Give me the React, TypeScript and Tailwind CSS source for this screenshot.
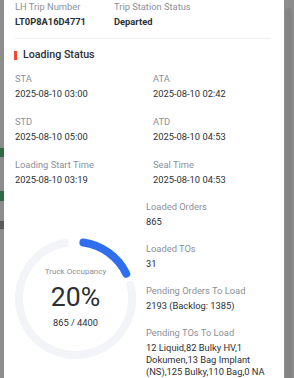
import React from "react";

const polar = (cx: number, cy: number, r: number, deg: number) => {
  const a = ((deg - 90) * Math.PI) / 180;
  return [cx + r * Math.cos(a), cy + r * Math.sin(a)];
};
const arc = (cx: number, cy: number, r: number, a1: number, a2: number) => {
  const [x1, y1] = polar(cx, cy, r, a1);
  const [x2, y2] = polar(cx, cy, r, a2);
  const large = a2 - a1 > 180 ? 1 : 0;
  return `M ${x1} ${y1} A ${r} ${r} 0 ${large} 1 ${x2} ${y2}`;
};

function Field({ label, value, bold }: { label: string; value: React.ReactNode; bold?: boolean }) {
  return (
    <div>
      <div className="text-[9.33px] leading-[14px] text-[#8b8f99]">{label}</div>
      <div
        className={`mt-[2px] text-[9.33px] leading-[12px] text-[#2b2f36] ${bold ? "font-bold" : ""}`}
      >
        {value}
      </div>
    </div>
  );
}

export default function App() {
  return (
    <div
      className="flex w-[294px] h-[378px] overflow-hidden bg-[#8c8c8c]"
      style={{ fontFamily: "Roboto, 'Noto Sans', sans-serif" }}
    >
      <div className="w-[4px] flex flex-col">
        <div className="h-[148px]" />
        <div className="h-[9px] bg-[#2f6a44]" />
        <div className="h-[34px]" />
        <div className="h-[10px] bg-[#2f6a44]" />
        <div className="h-[20px]" />
        <div className="h-[8px] bg-[#5a5a5a]" />
      </div>
      <div className="w-[280px] bg-white pl-[11px] pr-[13px]">
        <div className="flex">
          <div className="w-[99px]">
            <Field label="LH Trip Number" value="LT0P8A16D4771" bold />
          </div>
          <Field label="Trip Station Status" value="Departed" bold />
        </div>
        <div className="mt-[10px] h-px bg-[#eceef2]" />
        <div className="mt-[8px] flex items-center h-[16px] -ml-[1px]">
          <div className="w-[3px] h-[9px] bg-[#ee4d2d]" />
          <div className="ml-[6px] text-[10.67px] font-medium text-[#2b2f36] leading-[16px]">
            Loading Status
          </div>
        </div>
        <div className="mt-[9px] grid grid-cols-[138px_1fr] gap-y-[15px]">
          <Field label="STA" value="2025-08-10 03:00" />
          <Field label="ATA" value="2025-08-10 02:42" />
          <Field label="STD" value="2025-08-10 05:00" />
          <Field label="ATD" value="2025-08-10 04:53" />
          <Field label="Loading Start Time" value="2025-08-10 03:19" />
          <Field label="Seal Time" value="2025-08-10 04:53" />
        </div>
        <div className="mt-[14px] flex items-start">
          <div className="relative w-[121px] h-[121px] mt-[38px] shrink-0">
            <svg width="121" height="121" viewBox="0 0 121 121" className="absolute inset-0">
              <path
                d={arc(60.5, 60.5, 56.5, 76, 349)}
                fill="none"
                stroke="#f2f4f8"
                strokeWidth="8"
                strokeLinecap="round"
              />
              <path
                d={arc(60.5, 60.5, 56.5, 8, 64)}
                fill="none"
                stroke="#2f6fef"
                strokeWidth="8"
                strokeLinecap="round"
              />
            </svg>
            <div className="absolute inset-0 flex flex-col items-center">
              <div className="mt-[29px] text-[8px] leading-[10px] text-[#8b8f99]">Truck Occupancy</div>
              <div className="mt-[5px] text-[26.67px] leading-[30px] text-[#2b2f36]">20%</div>
              <div className="mt-[5px] text-[9.33px] leading-[12px] text-[#2b2f36]">865 / 4400</div>
            </div>
          </div>
          <div className="ml-[10px] flex flex-col gap-y-[14px] w-[125px]">
            <Field label="Loaded Orders" value="865" />
            <Field label="Loaded TOs" value="31" />
            <Field label="Pending Orders To Load" value="2193 (Backlog: 1385)" />
            <Field
              label="Pending TOs To Load"
              value="12 Liquid,82 Bulky HV,1 Dokumen,13 Bag Implant (NS),125 Bulky,110 Bag,0 NA"
            />
          </div>
        </div>
      </div>
      <div className="w-[10px] flex flex-col">
        <div className="h-[8px]" />
        <div className="ml-[1px] w-[7px] flex-1 rounded-t-full bg-[#848484]" />
      </div>
    </div>
  );
}
